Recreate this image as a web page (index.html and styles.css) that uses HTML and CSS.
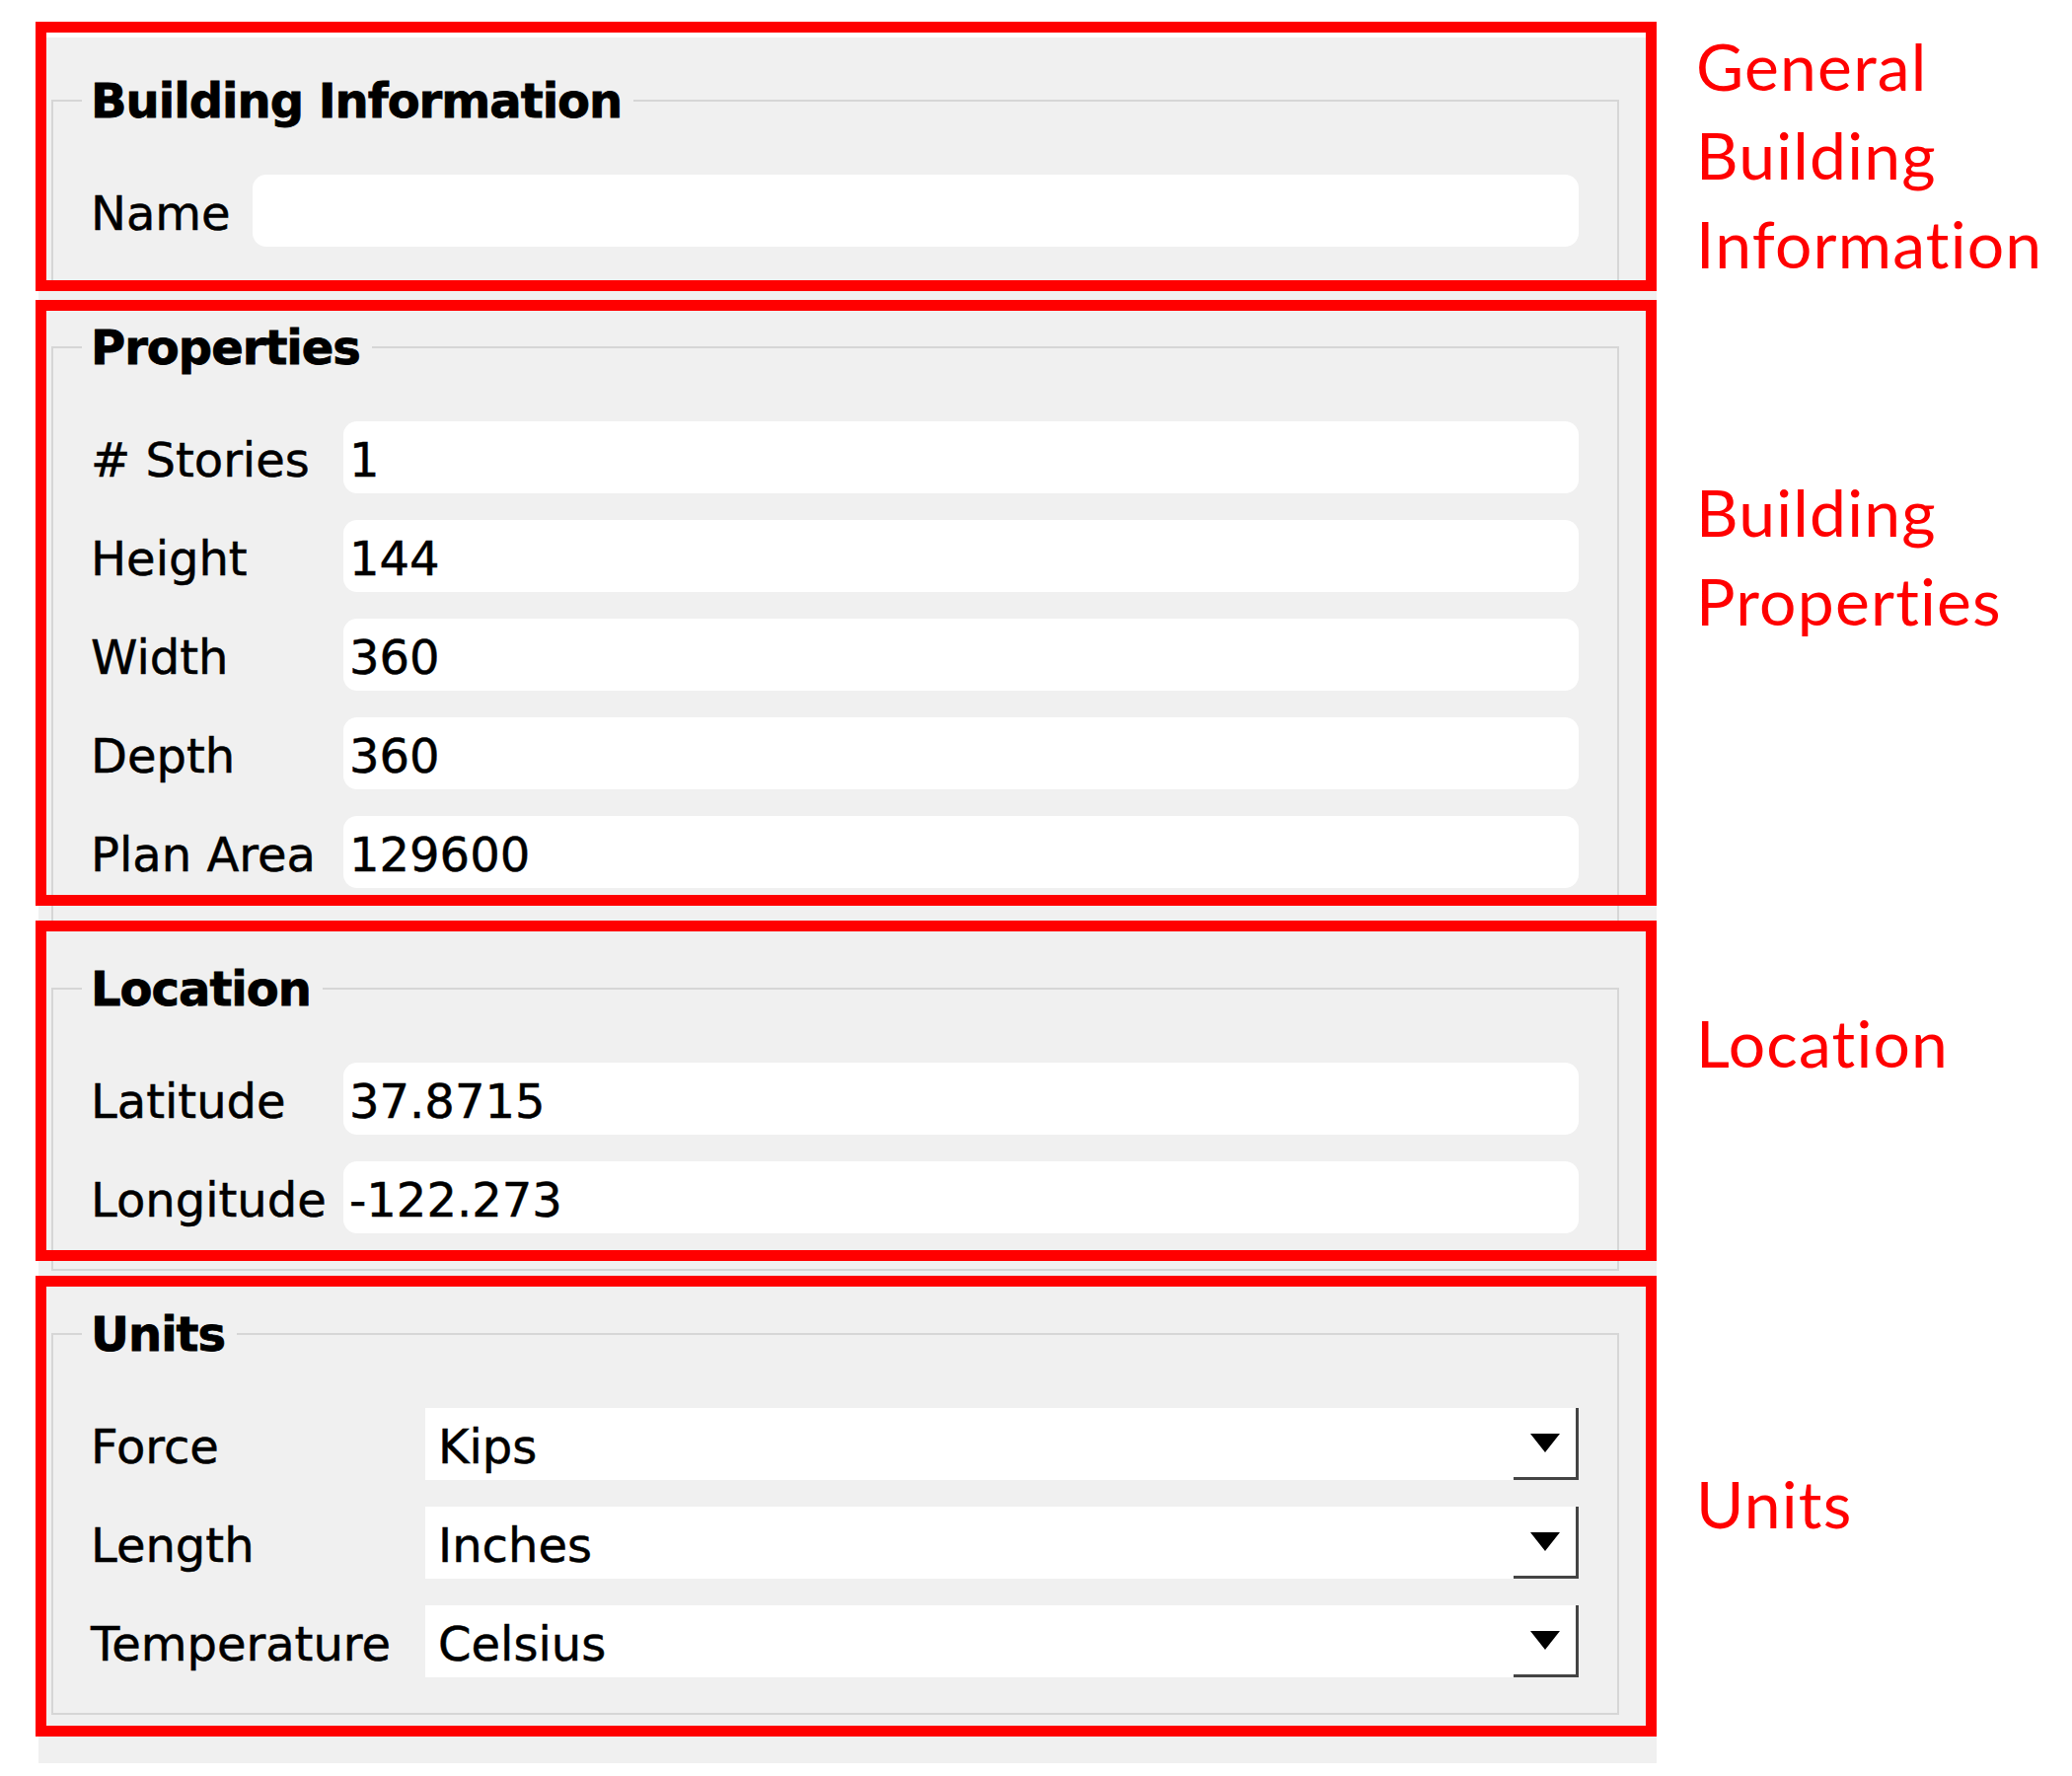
FILE: index.html
```html
<!DOCTYPE html>
<html lang="en">
<head>
<meta charset="utf-8">
<title>Building Information</title>
<link rel="stylesheet" href="styles.css">
</head>
<body>
<div class="page">
  <div class="panel">
    <fieldset class="group">
      <legend>Building Information</legend>
      <div class="form form-info">
        <span class="label">Name</span><div class="edit"></div>
      </div>
    </fieldset>
    <fieldset class="group">
      <legend>Properties</legend>
      <div class="form form-props">
        <span class="label"># Stories</span><div class="edit">1</div>
        <span class="label">Height</span><div class="edit">144</div>
        <span class="label">Width</span><div class="edit">360</div>
        <span class="label">Depth</span><div class="edit">360</div>
        <span class="label">Plan Area</span><div class="edit">129600</div>
      </div>
    </fieldset>
    <fieldset class="group">
      <legend>Location</legend>
      <div class="form form-props">
        <span class="label">Latitude</span><div class="edit">37.8715</div>
        <span class="label">Longitude</span><div class="edit">-122.273</div>
      </div>
    </fieldset>
    <fieldset class="group">
      <legend>Units</legend>
      <div class="form form-units">
        <span class="label">Force</span><div class="combo"><span>Kips</span><span class="drop"><span class="arrow"></span></span></div>
        <span class="label">Length</span><div class="combo"><span>Inches</span><span class="drop"><span class="arrow"></span></span></div>
        <span class="label">Temperature</span><div class="combo"><span>Celsius</span><span class="drop"><span class="arrow"></span></span></div>
      </div>
    </fieldset>
  </div>
  <div class="notes">
    <p class="note note-info">General<br>Building<br>Information</p>
    <p class="note note-props">Building<br>Properties</p>
    <p class="note note-loc">Location</p>
    <p class="note note-units">Units</p>
  </div>
  <div class="mark mark-info"></div>
  <div class="mark mark-props"></div>
  <div class="mark mark-loc"></div>
  <div class="mark mark-units"></div>
</div>
</body>
</html>
```
FILE: styles.css
```css
html, body {
  margin: 0;
  padding: 0;
  background: #ffffff;
}

.page {
  position: relative;
  display: flex;
  align-items: flex-start;
  width: 2100px;
  height: 1800px;
}

/* ---------- Qt-style panel ---------- */
.panel {
  box-sizing: border-box;
  width: 1640px;
  margin: 38px 0 0 39px;
  padding: 36px 38px 49px 13px;
  background: #f0f0f0;
  font-family: "DejaVu Sans", "Noto Sans", sans-serif;
  font-size: 48px;
  color: #000;
  -webkit-text-stroke: 0.5px #000;
  display: flex;
  flex-direction: column;
  gap: 36px;
}

.group {
  margin: 0;
  min-width: 0;
  border: 2px solid #d6d6d6;
  padding: 47px 39px 36px 29px;
}

.group legend {
  margin: 0;
  padding: 0 12px 0 9px;
  font-weight: bold;
  line-height: 56px;
  letter-spacing: -1px;
  -webkit-text-stroke: 0.8px #000;
}

.form {
  margin-left: 9px;
  display: grid;
  row-gap: 27px;
  align-items: start;
}

.form-info  { grid-template-columns: 164px 1fr; }
.form-props { grid-template-columns: 256px 1fr; }
.form-units { grid-template-columns: 339px 1fr; }

.label {
  box-sizing: border-box;
  height: 73px;
  padding-top: 6px;
  line-height: 67px;
  white-space: nowrap;
}

.edit {
  box-sizing: border-box;
  height: 73px;
  padding: 6px 0 0 6px;
  line-height: 67px;
  background: #ffffff;
  border-radius: 14px;
  white-space: nowrap;
}

.combo {
  box-sizing: border-box;
  height: 73px;
  padding: 6px 0 0 13px;
  line-height: 67px;
  background: #ffffff;
  display: flex;
  justify-content: space-between;
  white-space: nowrap;
}

.drop {
  box-sizing: border-box;
  width: 66px;
  height: 73px;
  margin-top: -6px;
  border-right: 3px solid #444444;
  border-bottom: 3px solid #444444;
  display: flex;
  justify-content: center;
  align-items: flex-start;
}

.arrow {
  width: 0;
  height: 0;
  margin-top: 26px;
  border-left: 15px solid transparent;
  border-right: 15px solid transparent;
  border-top: 19px solid #000;
}

/* ---------- annotations ---------- */
.notes {
  margin-left: 40px;
  font-family: Lato, "Open Sans", sans-serif;
  font-size: 66px;
  line-height: 90px;
  letter-spacing: 1.2px;
  color: #ff0000;
  white-space: nowrap;
}

.note { margin: 0; }
.note-info  { margin-top: 22px; }
.note-props { margin-top: 182px; }
.note-loc   { margin-top: 358px; }
.note-units { margin-top: 377px; }

.mark {
  position: absolute;
  left: 36px;
  width: 1643px;
  box-sizing: border-box;
  border: 11px solid #ff0000;
}

.mark-info  { top: 22px;   height: 273px; }
.mark-props { top: 304px;  height: 614px; }
.mark-loc   { top: 933px;  height: 345px; }
.mark-units { top: 1293px; height: 467px; }
```
